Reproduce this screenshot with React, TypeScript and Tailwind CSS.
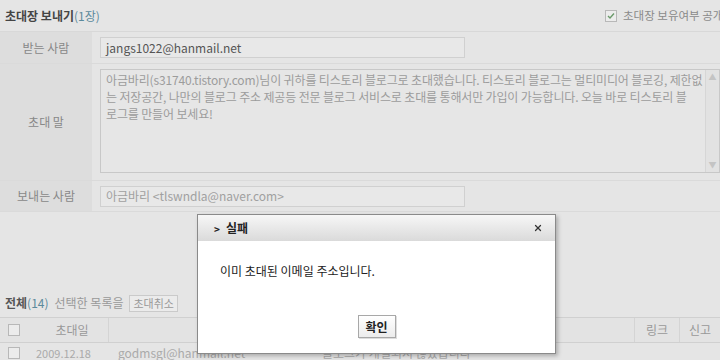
import { X } from 'lucide-react';

const font = { fontFamily: '"Noto Sans CJK KR", "Noto Sans", sans-serif' };

function Box({ checked = false }: { checked?: boolean }) {
  return (
    <span className="inline-flex h-[12px] w-[12px] shrink-0 items-center justify-center border border-[#b8b8b8] bg-[#ececec]">
      {checked && (
        <svg width="8" height="8" viewBox="0 0 8 8">
          <path d="M1 4 L3 6 L7 1.5" fill="none" stroke="#6a9a6a" strokeWidth="1.4" />
        </svg>
      )}
    </span>
  );
}

function Label({ children }: { children: React.ReactNode }) {
  return <div className="flex w-[92px] shrink-0 items-center justify-center bg-[#dddddd] text-[#888]">{children}</div>;
}

function Dialog() {
  return (
    <div className="absolute left-[197px] top-[214px] flex h-[140px] w-[359px] flex-col border border-[#8a8a8a] bg-white shadow-[2px_2px_4px_rgba(0,0,0,0.25)]">
      <div className="flex h-[26px] items-center justify-between bg-gradient-to-b from-[#f7f7f7] to-[#dadada] pl-[16px] pr-[12px]">
        <div className="flex items-center gap-[6px] text-[12px] font-bold text-[#222]">
          <span className="text-[10px]">&gt;</span>
          <span>실패</span>
        </div>
        <X className="h-[10px] w-[10px] text-[#333]" strokeWidth={3} />
      </div>
      <div className="pl-[22px] pt-[21px] text-[12px] text-[#222]">이미 초대된 이메일 주소입니다.</div>
      <div className="mt-auto mb-[15px] flex justify-center">
        <button className="h-[23px] w-[38px] border border-[#a8a8a8] bg-gradient-to-b from-white to-[#ececec] text-[12px] font-bold text-[#222] shadow-[1px_1px_0_#ddd]">
          확인
        </button>
      </div>
    </div>
  );
}

export default function App() {
  return (
    <div className="relative h-[360px] w-[720px] overflow-hidden bg-[#e5e5e5] text-[12px]" style={font}>
      <div className="flex h-[31px] items-center pl-[5px]">
        <div className="text-[12px] font-bold text-[#444]">
          초대장 보내기<span className="font-normal text-[#5b8a9c]">(1장)</span>
        </div>
        <div className="ml-auto flex w-[115px] shrink-0 items-center gap-[6px] whitespace-nowrap text-[11.5px] text-[#8a8a8a]">
          <Box checked />
          <span>초대장 보유여부 공개</span>
        </div>
      </div>

      <div className="border-t border-[#d8d8d8]">
        <div className="flex h-[32px] border-b border-[#dadada]">
          <Label>받는 사람</Label>
          <div className="flex items-center pl-[8px]">
            <div className="flex h-[21px] w-[365px] items-center border border-[#d0d0d0] bg-[#e8e8e8] pl-[5px] text-[#555]">
              jangs1022@hanmail.net
            </div>
          </div>
        </div>
        <div className="flex h-[117px] border-b border-[#dadada]">
          <Label>초대 말</Label>
          <div className="flex min-w-0 flex-1 pl-[8px] pt-[5px]">
            <div className="flex h-[104px] min-w-0 flex-1 border border-[#c8c8c8] bg-[#e6e6e6]">
              <div className="min-w-0 flex-1 overflow-hidden whitespace-nowrap pl-[5px] pt-[1px] text-[12px] leading-[17px] tracking-[-0.15px] text-[#9c9c9c]">
                아금바리(s31740.tistory.com)님이 귀하를 티스토리 블로그로 초대했습니다. 티스토리 블로그는 멀티미디어 블로깅, 제한없
                <br />
                는 저장공간, 나만의 블로그 주소 제공등 전문 블로그 서비스로 초대를 통해서만 가입이 가능합니다. 오늘 바로 티스토리 블
                <br />
                로그를 만들어 보세요!
              </div>
              <div className="flex w-[14px] shrink-0 flex-col justify-between border-l border-[#d6d6d6] bg-[#e2e2e2] text-[8px] leading-[14px] text-[#c4c4c4]">
                <span className="text-center">▲</span>
                <span className="text-center">▼</span>
              </div>
            </div>
          </div>
        </div>
        <div className="flex h-[31px] border-b border-[#dadada]">
          <Label>보내는 사람</Label>
          <div className="flex items-center pl-[8px]">
            <div className="flex h-[21px] w-[365px] items-center border border-[#d0d0d0] bg-[#e8e8e8] pl-[5px] text-[#a0a0a0]">
              아금바리 &lt;tlswndla@naver.com&gt;
            </div>
          </div>
        </div>
      </div>

      <div className="mt-[79px] flex h-[24px] items-center gap-[6px] pl-[5px]">
        <span className="font-bold text-[#555]">
          전체<span className="font-normal text-[#5b8a9c]">(14)</span>
        </span>
        <span className="text-[#999]">선택한 목록을</span>
        <span className="flex h-[17px] items-center border border-[#cacaca] bg-[#ebebeb] px-[3px] text-[11px] text-[#999]">초대취소</span>
      </div>

      <div className="mt-[2px] flex h-[26px] border-y border-[#d0d0d0] bg-[#e3e3e3] text-[#999]">
        <div className="flex w-[36px] items-center pl-[8px]">
          <Box />
        </div>
        <div className="flex w-[73px] items-center justify-center border-r border-[#d4d4d4]">초대일</div>
        <div className="flex-1 border-r border-[#d4d4d4]" />
        <div className="flex w-[45px] items-center justify-center border-r border-[#d4d4d4]">링크</div>
        <div className="flex w-[40px] items-center justify-center">신고</div>
      </div>
      <div className="flex h-[20px] items-center text-[#aaa]">
        <div className="flex w-[36px] pl-[8px]">
          <Box />
        </div>
        <div className="w-[82px] text-[11px]">2009.12.18</div>
        <div className="w-[204px]">godmsgl@hanmail.net</div>
        <div className="flex-1">블로그가 개설되지 않았습니다</div>
      </div>

      <Dialog />
    </div>
  );
}
